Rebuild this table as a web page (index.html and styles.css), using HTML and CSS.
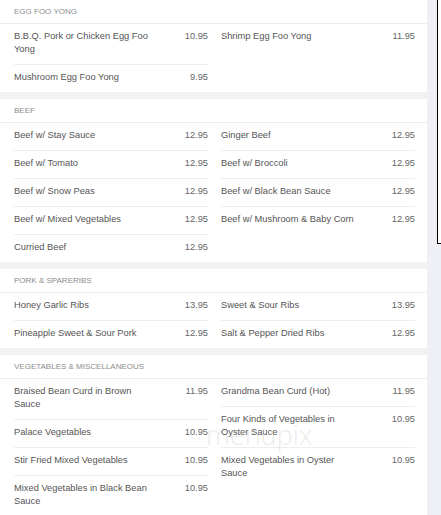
FILE: index.html
```html
<!DOCTYPE html>
<html>
<head>
<meta charset="utf-8">
<link rel="stylesheet" href="styles.css">
</head>
<body>
<div class="page">
  <main class="menu">
    <section class="sec first">
      <h2 class="sec-head">EGG FOO YONG</h2>
      <div class="cols">
        <ul class="col">
          <li class="item"><span class="name">B.B.Q. Pork or Chicken Egg Foo Yong</span><span class="price">10.95</span></li>
          <li class="item"><span class="name">Mushroom Egg Foo Yong</span><span class="price">9.95</span></li>
        </ul>
        <ul class="col">
          <li class="item"><span class="name">Shrimp Egg Foo Yong</span><span class="price">11.95</span></li>
        </ul>
      </div>
    </section>
    <section class="sec">
      <h2 class="sec-head">BEEF</h2>
      <div class="cols">
        <ul class="col">
          <li class="item"><span class="name">Beef w/ Stay Sauce</span><span class="price">12.95</span></li>
          <li class="item"><span class="name">Beef w/ Tomato</span><span class="price">12.95</span></li>
          <li class="item"><span class="name">Beef w/ Snow Peas</span><span class="price">12.95</span></li>
          <li class="item"><span class="name">Beef w/ Mixed Vegetables</span><span class="price">12.95</span></li>
          <li class="item"><span class="name">Curried Beef</span><span class="price">12.95</span></li>
        </ul>
        <ul class="col">
          <li class="item"><span class="name">Ginger Beef</span><span class="price">12.95</span></li>
          <li class="item"><span class="name">Beef w/ Broccoli</span><span class="price">12.95</span></li>
          <li class="item"><span class="name">Beef w/ Black Bean Sauce</span><span class="price">12.95</span></li>
          <li class="item"><span class="name">Beef w/ Mushroom &amp; Baby Corn</span><span class="price">12.95</span></li>
        </ul>
      </div>
    </section>
    <section class="sec">
      <h2 class="sec-head">PORK &amp; SPARERIBS</h2>
      <div class="cols">
        <ul class="col">
          <li class="item"><span class="name">Honey Garlic Ribs</span><span class="price">13.95</span></li>
          <li class="item"><span class="name">Pineapple Sweet &amp; Sour Pork</span><span class="price">12.95</span></li>
        </ul>
        <ul class="col">
          <li class="item"><span class="name">Sweet &amp; Sour Ribs</span><span class="price">13.95</span></li>
          <li class="item"><span class="name">Salt &amp; Pepper Dried Ribs</span><span class="price">12.95</span></li>
        </ul>
      </div>
    </section>
    <section class="sec">
      <h2 class="sec-head">VEGETABLES &amp; MISCELLANEOUS</h2>
      <div class="cols">
        <ul class="col">
          <li class="item"><span class="name">Braised Bean Curd in Brown Sauce</span><span class="price">11.95</span></li>
          <li class="item"><span class="name">Palace Vegetables</span><span class="price">10.95</span></li>
          <li class="item"><span class="name">Stir Fried Mixed Vegetables</span><span class="price">10.95</span></li>
          <li class="item"><span class="name">Mixed Vegetables in Black Bean Sauce</span><span class="price">10.95</span></li>
        </ul>
        <ul class="col">
          <li class="item"><span class="name">Grandma Bean Curd (Hot)</span><span class="price">11.95</span></li>
          <li class="item"><span class="name">Four Kinds of Vegetables in Oyster Sauce</span><span class="price">10.95</span></li>
          <li class="item"><span class="name">Mixed Vegetables in Oyster Sauce</span><span class="price">10.95</span></li>
        </ul>
      </div>
    </section>
    <div class="watermark">menupix</div>
  </main>
  <div class="side-box"></div>
</div>
</body>
</html>
```
FILE: styles.css
```css
html, body {
  margin: 0;
  padding: 0;
}
body {
  background: #efeff6;
  font-family: "Liberation Sans", Arial, sans-serif;
  color: #555;
  overflow: hidden;
  height: 515px;
}
.page {
  position: relative;
  height: 515px;
}
.menu {
  position: relative;
  width: 427px;
  background: #f2f2f2;
  display: flex;
  flex-direction: column;
  gap: 7px;
}
.sec {
  background: #fff;
}
.sec-head {
  margin: 0;
  height: 23px;
  line-height: 23px;
  padding: 0 14px;
  font-size: 8px;
  font-weight: normal;
  color: #8c8c8c;
  border-bottom: 1px solid #ececec;
}
.cols {
  display: flex;
  gap: 13px;
  padding: 0 12px 0 14px;
}
.col {
  list-style: none;
  margin: 0;
  padding: 0;
  width: 194px;
  display: flex;
  flex-direction: column;
}
.item {
  display: flex;
  justify-content: space-between;
  align-items: flex-start;
  padding: 6px 0 8px;
  font-size: 9.3px;
  line-height: 13px;
  border-bottom: 1px solid #eeeeee;
}
.item:last-child {
  border-bottom: none;
}
.name {
  max-width: 140px;
}
.price {
  color: #666;
}
.watermark {
  position: absolute;
  left: 206px;
  top: 416px;
  font-family: "Open Sans", sans-serif;
  font-weight: 300;
  font-size: 27px;
  color: rgba(190, 190, 190, 0.3);
  pointer-events: none;
}
.side-box {
  position: absolute;
  left: 437px;
  top: -1px;
  width: 20px;
  height: 243px;
  background: #fff;
  border: 1px solid #000;
}
```
